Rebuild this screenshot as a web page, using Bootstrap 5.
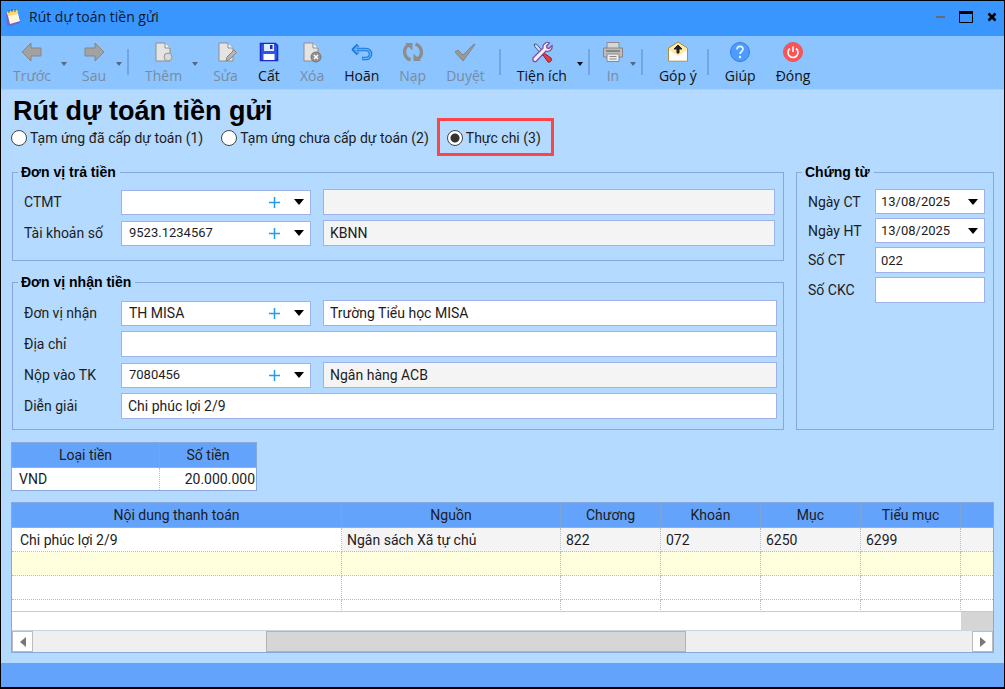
<!DOCTYPE html>
<html lang="vi">
<head>
<meta charset="utf-8">
<meta name="viewport" content="width=device-width, initial-scale=1">
<title>Rút dự toán tiền gửi</title>
<link href="https://cdn.jsdelivr.net/npm/bootstrap@5.3.0/dist/css/bootstrap.min.css" rel="stylesheet">
<style>
  :root { --line: #88a8dc; --field: #9fb1e9; --head: #63a3fb; --ink: #1c1c24; }
  body { font-family: Roboto, "Liberation Sans", sans-serif; font-size: 14px; line-height: 16px; color: var(--ink); background: #b5daff; }
  .app-window { min-height: 100vh; border: 1px solid #000; border-bottom-width: 2px; }
  .title-bar { background: #3896fe; height: 35px; font-family: "Open Sans", "Noto Sans", sans-serif; padding: 0 7px 4px 4px; color: #10182c; }
  .title-bar button, .tool-bar button, .plus-btn, .scroll-row button { border: 0; background: none; padding: 0; color: inherit; }
  .title-text { margin-left: 7px; }
  .win-controls { gap: 14px; }
  .tool-bar { background: #8bc4ff; height: 54px; border-bottom: 1px solid #a4d1ff; padding: 4px 2px 0; font-family: "Open Sans", "Noto Sans", sans-serif; line-height: 20px; color: #111; }
  .tool-bar .tool { padding: 0 10px; }
  .tool-bar .tool.narrow { padding: 0 6px; }
  .tool svg { width: 22px; height: 22px; display: block; margin: 1px auto 3px; }
  .tool:disabled { color: #7a8ba1 !important; }
  .tool-bar .drop { width: 11px; height: 46px; flex: none; text-align: left; }
  .tool-bar .drop::before { content: ""; display: block; border: 3px solid transparent; border-top: 4px solid #111; width: 0; margin-top: 4px; }
  .tool-bar .drop:disabled::before { border-top-color: #59697c; }
  .sep { width: 2px; height: 26px; margin: 9px 6px 0 0; background: #74a5e2; flex: none; }
  .page-title { font: bold 27px/33px "Liberation Sans", sans-serif; color: #000; margin: 0 0 0 2px; }
  main { padding: 5px 10px 10px; }
  .type-choice { gap: 15px; }
  .type-choice label { display: flex; align-items: center; gap: 3px; padding: 2px 3px 0 0; line-height: 16px; }
  .type-choice .picked { outline: 3px solid #fb4549; outline-offset: 7px; }
  .type-choice input { appearance: none; width: 16px; height: 16px; margin: 0; border: 1px solid #444; border-radius: 50%; background: #fff; flex: none; }
  .type-choice input:checked { background: radial-gradient(circle, #333 0 4px, #fff 5px); }
  .type-choice span { white-space: nowrap; }
  .form-area { display: grid; grid-template-columns: minmax(0, 1fr) 198px; column-gap: 12px; margin: 18px 0 12px 1px; }
  .form-area fieldset { border: 1px solid var(--line); padding: 9px 8px 14px 10px; }
  .form-area legend { float: none; width: auto; font: bold 14px/16px "Liberation Sans", sans-serif; color: #000; margin: 0 0 0 -5px; padding: 0 4px 0 3px; }
  .form-area .payer { margin-bottom: 13px; }
  .form-area .payee { padding: 10px 6px 10px 10px; }
  .field-grid { display: grid; grid-template-columns: 86px 190px minmax(0, 1fr); column-gap: 12px; row-gap: 5px; align-items: center; }
  .field-grid label { white-space: nowrap; margin-right: -12px; padding-left: 1px; }
  .wide-cell { grid-column: 2 / -1; }
  .voucher .field-grid { grid-template-columns: 56px minmax(0, 1fr); row-gap: 4px; }
  .field { width: 100%; height: 26px; border: 1px solid var(--field); border-radius: 0; background: #fff; padding: 0 6px; color: var(--ink); line-height: 16px; outline: 0; display: block; }
  .field:read-only:not(select) { background: #f4f4f4; }
  select.field { appearance: none; background: #fff url("data:image/svg+xml,%3Csvg xmlns='http://www.w3.org/2000/svg' width='10' height='6'%3E%3Cpath d='M0 0h10L5 6z'/%3E%3C/svg%3E") no-repeat right 6px center; height: 25px; padding-left: 7px; }
  .voucher .field { padding-left: 5px; }
  .figures { font-size: 13px; }
  .plus-btn { position: absolute; right: 31px; top: 7px; width: 11px; height: 11px; display: flex; }
  .grid-frame { border: 1px solid var(--line); background: #fff; }
  .data-grid { width: 100%; table-layout: fixed; border-collapse: separate; border-spacing: 0; }
  .data-grid th { background: var(--head); height: 25px; font-weight: 400; text-align: center; padding: 0; border-right: 1px solid #7fa5d6; border-bottom: 1px solid #8fb0dc; }
  .data-grid td { height: 24px; padding: 0 5px; border-right: 1px dotted #bdbdbd; border-bottom: 1px dotted #bdbdbd; overflow: hidden; }
  .data-grid th:last-child, .data-grid td:last-child { border-right: 0; }
  .data-grid .entry td:first-child { padding-left: 8px; }
  .currency { width: 246px; margin-bottom: 11px; }
  .currency td { height: 22px; border-bottom: 0; padding: 0 1px 0 7px; }
  .c-money { width: 148px; }
  .c-source { width: 219px; }
  .c-code { width: 100px; }
  .c-rest { width: 32px; }
  .locked { background: #f4f4f4; }
  .new-row td { background: #ffffde; }
  .data-grid .cut-row td { height: 12px; border-bottom: 1px solid #b9cce4; }
  .data-grid .sum-row td { height: 19px; border-right: 0; border-bottom: 1px solid #c6d4e6; }
  .sum-row td:last-child { background: #d5d5d5; }
  .scroll-row { height: 21px; background: #efefef; }
  .scroll-row button { width: 21px; border: 1px solid #bcbcbc; background: #fff; flex: none; display: flex; align-items: center; justify-content: center; }
  .thumb { width: 44.7%; margin-left: 24.8%; height: 100%; background: #d6d6d6; border: 1px solid #b4b4b4; }
  .status-bar { height: 24px; background: var(--head); }
</style>
</head>
<body>
<div class="app-window d-flex flex-column">
  <header class="title-bar d-flex align-items-center">
    <svg width="17" height="18" viewBox="0 0 17 18" aria-hidden="true"><path d="M1 6l1 11 3 1 10-3V9z" fill="#7564c9"/><path d="M2 4l10-2 3 11-10 3z" fill="#fff7dd"/><path d="M2 4l10-2 1 4L3 8z" fill="#ffd76b"/><path d="M4 2v3M7 1v3M10 1v3" stroke="#556"/></svg>
    <span class="title-text me-auto">Rút dự toán tiền gửi</span>
    <div class="win-controls d-flex align-items-center">
      <button aria-label="Thu nhỏ"><svg width="9" height="14" viewBox="0 0 9 14" class="d-block"><path d="M0 6h9v2H0z" fill="#666b76"/></svg></button>
      <button aria-label="Phóng to"><svg width="14" height="14" viewBox="0 0 14 14" class="d-block"><path d="M.5 1.500h13v11H.5z" fill="none" stroke="#000"/><path d="M0 1h14v3H0z"/></svg></button>
      <button aria-label="Đóng cửa sổ"><svg width="10" height="14" viewBox="0 0 10 14" class="d-block"><path d="M1.500 3.500l7 7m0-7l-7 7" stroke="#000" stroke-width="2.600"/></svg></button>
    </div>
  </header>

  <nav class="tool-bar d-flex align-items-start" aria-label="Thanh công cụ">
    <button class="tool" disabled><svg viewBox="0 0 22 22"><path d="M1 11l9-9v5h10v8H10v5z" fill="#a2a2a2" stroke="#858585"/></svg>Trước</button>
    <button class="drop" disabled aria-label="Chọn trước"></button>
    <button class="tool" disabled><svg viewBox="0 0 22 22"><path d="M21 11l-9-9v5H2v8h10v5z" fill="#a2a2a2" stroke="#858585"/></svg>Sau</button>
    <button class="drop" disabled aria-label="Chọn sau"></button>
    <span class="sep"></span>
    <button class="tool" disabled><svg viewBox="0 0 22 22"><path d="M3 2h9l5 5v13H3z" fill="#e4e4e4" stroke="#8e8e8e"/><path d="M12 2v5h5" fill="#f4f4f4" stroke="#8e8e8e"/><circle cx="15" cy="16" r="4" fill="#d8d8d8" stroke="#999"/></svg>Thêm</button>
    <button class="drop" disabled aria-label="Chọn kiểu thêm"></button>
    <button class="tool" disabled><svg viewBox="0 0 22 22"><path d="M4 2h9l5 5v13H4z" fill="#e4e4e4" stroke="#8e8e8e"/><path d="M13 2v5h5" fill="#f4f4f4" stroke="#8e8e8e"/><path d="M11 20l1-4 7-7 2.500 2.500-7 7z" fill="#b5b5b5" stroke="#858585"/></svg>Sửa</button>
    <button class="tool"><svg viewBox="0 0 22 22"><path d="M2.500 2.500h15l2 2v15h-17z" fill="#2e57ea" stroke="#1b2bc4" stroke-width="1.500"/><path d="M6 3h10v7H6z" fill="#dce9ff"/><path d="M12 4h2.500v4H12z" fill="#1d2fa8"/><path d="M5.500 13h11v6h-11z" fill="#fff"/></svg>Cất</button>
    <button class="tool" disabled><svg viewBox="0 0 22 22"><path d="M3 2h9l5 5v13H3z" fill="#e4e4e4" stroke="#8e8e8e"/><path d="M12 2v5h5" fill="#f4f4f4" stroke="#8e8e8e"/><circle cx="15" cy="16" r="5" fill="#929292" stroke="#777"/><path d="M13 14l4 4m0-4l-4 4" stroke="#fff" stroke-width="1.500"/></svg>Xóa</button>
    <button class="tool"><svg viewBox="0 0 22 22" fill="none" stroke-linejoin="round"><path d="M7 4L2.500 8.500 7 13M3 8.500h12a4.500 4.500 0 0 1 0 9h-4" stroke="#1f76dc" stroke-width="3.600"/><path d="M7 5L3.500 8.500 7 12M4 8.500h11a4.500 4.500 0 0 1 0 9h-3.500" stroke="#5cb1fb" stroke-width="1.500"/></svg>Hoãn</button>
    <button class="tool" disabled><svg viewBox="0 0 22 22"><path d="M8.500 19C1 16 1 7 6.500 4M13.500 3c7.500 3 7.500 12 2 15" stroke="#8d8d8d" stroke-width="3.400" fill="none"/><path d="M3 2h7.500v7.500zM19 20h-7.500v-7.500z" fill="#8d8d8d"/></svg>Nạp</button>
    <button class="tool" disabled><svg viewBox="0 0 22 22"><path d="M1 11l3-2 5 5L20 3l1 .5L9 20z" fill="#999" stroke="#858585"/></svg>Duyệt</button>
    <span class="sep ms-1"></span>
    <button class="tool"><svg viewBox="0 0 22 22"><path d="M3 3l3 .5L14 13l-2 2L4 6z" fill="#c9daf4" stroke="#465f91"/><path d="M13 12l7 5c2 2-1 5-3 4l-5-7z" fill="#e23b43" stroke="#9d1d2b"/><path d="M14 2.500c2-2 4-1 4.500-.5l-3 3 .5 2 2 .5 3-3c1 4-3 7-6 5.500L5.500 20c-2 2-5-1-3-3.500L12 7c-.5-2 .5-3.500 2-4.500z" fill="#f4eef9" stroke="#84509c" stroke-width="1.300"/></svg>Tiện ích</button>
    <button class="drop" aria-label="Chọn tiện ích"></button>
    <span class="sep"></span>
    <button class="tool narrow" disabled><svg viewBox="0 0 22 22"><path d="M5 1.500h12V8H5z" fill="#d7d7d7" stroke="#8a8a8a"/><path d="M1.500 7h19v9h-19z" fill="#bcbcbc" stroke="#868686"/><path d="M4 9h14v2H4z" fill="#888"/><path d="M5 13h12v7.500H5z" fill="#ececec" stroke="#8a8a8a"/><path d="M7.500 15.500h7M7.500 18h7" stroke="#888"/></svg>In</button>
    <button class="drop" disabled aria-label="Chọn kiểu in"></button>
    <span class="sep"></span>
    <button class="tool"><svg viewBox="0 0 22 22"><path d="M1.500 7L11 1l9.500 6v13h-19z" fill="#ffe9a4" stroke="#ab8d43"/><path d="M2 9l9 6 9-6v10.500H2z" fill="#fff"/><path d="M11 4L7 8h3v4h2V8h3z" fill="#222" stroke="#222"/></svg>Góp ý</button>
    <span class="sep"></span>
    <button class="tool"><svg viewBox="0 0 22 22"><circle cx="11" cy="11" r="9.500" fill="#4e9bff" stroke="#347ee2"/><path d="M8 8.500c0-4 6-4 6-.5 0 2.500-3 2.500-3 5" stroke="#e8f4ff" stroke-width="1.700" fill="none"/><circle cx="11" cy="16" r="1.200" fill="#e8f4ff"/></svg>Giúp</button>
    <button class="tool"><svg viewBox="0 0 22 22"><circle cx="11" cy="11" r="9.500" fill="#fb5356" stroke="#e0595f"/><path d="M8 7.500a5 5 0 1 0 6 0M11 5.500V11" stroke="#fff" stroke-width="1.600" fill="none"/></svg>Đóng</button>
  </nav>

  <main class="flex-grow-1">
    <h1 class="page-title">Rút dự toán tiền gửi</h1>
    <div class="type-choice d-flex">
      <label><input type="radio" name="kind"><span>Tạm ứng đã cấp dự toán (1)</span></label>
      <label><input type="radio" name="kind"><span>Tạm ứng chưa cấp dự toán (2)</span></label>
      <label class="picked"><input type="radio" name="kind" checked><span>Thực chi (3)</span></label>
    </div>

    <div class="form-area">
      <div>
        <fieldset class="payer">
          <legend>Đơn vị trả tiền</legend>
          <div class="field-grid">
            <label for="ctmt">CTMT</label>
            <div class="position-relative"><select id="ctmt" class="field"><option></option></select><button class="plus-btn" aria-label="Thêm CTMT"><svg width="11" height="11"><path d="M5.500 0v11M0 5.500h11" stroke="#249bee" stroke-width="1.500"/></svg></button></div>
            <input class="field" aria-label="Tên CTMT" readonly>
            <label for="account">Tài khoản số</label>
            <div class="position-relative"><select id="account" class="field figures"><option>9523.1234567</option></select><button class="plus-btn" aria-label="Thêm tài khoản"><svg width="11" height="11"><path d="M5.500 0v11M0 5.500h11" stroke="#249bee" stroke-width="1.500"/></svg></button></div>
            <input class="field" aria-label="Tên tài khoản" value="KBNN" readonly>
          </div>
        </fieldset>
        <fieldset class="payee">
          <legend>Đơn vị nhận tiền</legend>
          <div class="field-grid">
            <label for="payee">Đơn vị nhận</label>
            <div class="position-relative"><select id="payee" class="field"><option>TH MISA</option></select><button class="plus-btn" aria-label="Thêm đơn vị"><svg width="11" height="11"><path d="M5.500 0v11M0 5.500h11" stroke="#249bee" stroke-width="1.500"/></svg></button></div>
            <input class="field" aria-label="Tên đơn vị" value="Trường Tiểu học MISA">
            <label for="address">Địa chỉ</label>
            <div class="wide-cell"><input id="address" class="field"></div>
            <label for="bank">Nộp vào TK</label>
            <div class="position-relative"><select id="bank" class="field figures"><option>7080456</option></select><button class="plus-btn" aria-label="Thêm tài khoản nhận"><svg width="11" height="11"><path d="M5.500 0v11M0 5.500h11" stroke="#249bee" stroke-width="1.500"/></svg></button></div>
            <input class="field" aria-label="Tên ngân hàng" value="Ngân hàng ACB" readonly>
            <label for="note">Diễn giải</label>
            <div class="wide-cell"><input id="note" class="field" value="Chi phúc lợi 2/9"></div>
          </div>
        </fieldset>
      </div>
      <fieldset class="voucher">
        <legend>Chứng từ</legend>
        <div class="field-grid">
          <label for="docdate">Ngày CT</label><select id="docdate" class="field figures"><option>13/08/2025</option></select>
          <label for="postdate">Ngày HT</label><select id="postdate" class="field figures"><option>13/08/2025</option></select>
          <label for="docno">Số CT</label><input id="docno" class="field figures" value="022">
          <label for="checkno">Số CKC</label><input id="checkno" class="field">
        </div>
      </fieldset>
    </div>

    <div class="grid-frame currency">
      <table class="data-grid">
        <colgroup><col class="c-money"><col></colgroup>
        <thead><tr><th scope="col">Loại tiền</th><th scope="col">Số tiền</th></tr></thead>
        <tbody><tr><td>VND</td><td class="text-end">20.000.000</td></tr></tbody>
      </table>
    </div>

    <div class="grid-frame">
      <table class="data-grid">
        <colgroup><col><col class="c-source"><col class="c-code"><col class="c-code"><col class="c-code"><col class="c-code"><col class="c-rest"></colgroup>
        <thead><tr><th scope="col">Nội dung thanh toán</th><th scope="col">Nguồn</th><th scope="col">Chương</th><th scope="col">Khoản</th><th scope="col">Mục</th><th scope="col">Tiểu mục</th><th></th></tr></thead>
        <tbody>
          <tr class="entry"><td>Chi phúc lợi 2/9</td><td class="locked">Ngân sách Xã tự chủ</td><td class="locked">822</td><td class="locked">072</td><td class="locked">6250</td><td class="locked">6299</td><td class="locked"></td></tr>
          <tr class="new-row"><td></td><td></td><td></td><td></td><td></td><td></td><td></td></tr>
          <tr><td></td><td></td><td></td><td></td><td></td><td></td><td></td></tr>
          <tr class="cut-row"><td></td><td></td><td></td><td></td><td></td><td></td><td></td></tr>
          <tr class="sum-row"><td colspan="6"></td><td></td></tr>
        </tbody>
      </table>
      <div class="scroll-row d-flex">
        <button aria-label="Cuộn trái"><svg width="6" height="10"><path d="M6 0v10L0 5z" fill="#777"/></svg></button>
        <div class="flex-grow-1"><div class="thumb"></div></div>
        <button aria-label="Cuộn phải"><svg width="6" height="10"><path d="M0 0v10l6-5z" fill="#777"/></svg></button>
      </div>
    </div>
  </main>
  <footer class="status-bar"></footer>
</div>
<script src="https://cdn.jsdelivr.net/npm/bootstrap@5.3.0/dist/js/bootstrap.bundle.min.js"></script>
</body>
</html>
